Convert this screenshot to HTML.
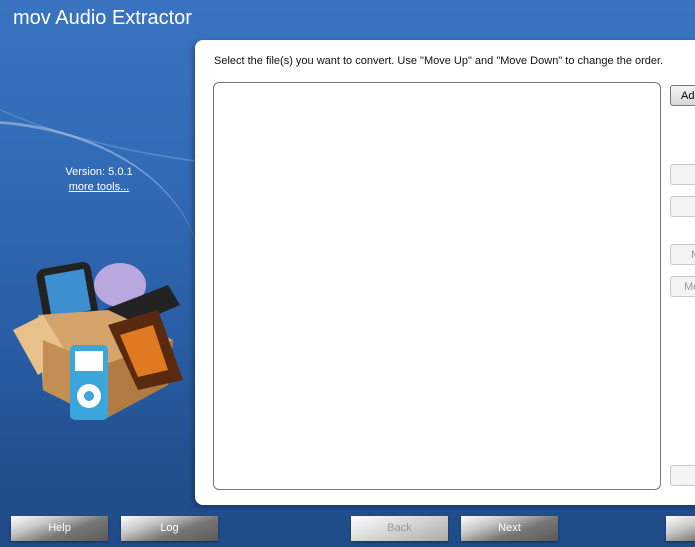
<!DOCTYPE html>
<html><head><style>
body{margin:0;width:695px;height:547px;overflow:hidden;position:relative;font-family:"Liberation Sans",sans-serif;
background:linear-gradient(180deg,#3a74c0 0%,#3069b4 35%,#2a5ea6 60%,#21508f 85%,#1f4b88 100%);}
.sw{position:absolute;left:-100px;top:-160px;width:900px;height:330px;border-radius:50%;border-bottom:2px solid rgba(255,255,255,0.18);}
.sw2{position:absolute;left:-250px;top:120px;width:450px;height:300px;border-radius:50%;border-top:3px solid rgba(255,255,255,0.35);}
.title{position:absolute;left:13px;top:7px;color:#fff;font-size:20px;}
.ver{position:absolute;left:0;width:198px;text-align:center;top:165px;color:#fff;font-size:11px;line-height:15px}
.ver u{color:#fff}
.panel{position:absolute;left:195px;top:40px;width:520px;height:465px;background:#fff;border-radius:8px;box-shadow:-2px 2px 6px rgba(0,0,0,0.3)}
.inst{position:absolute;left:214px;top:55px;font-size:11px;color:#111;white-space:nowrap}
.list{position:absolute;left:213px;top:82px;width:446px;height:406px;border:1px solid #777;border-radius:6px;background:#fff}
.sb{position:absolute;left:670px;width:40px;height:21px;border:1px solid #c8c8c8;border-radius:3px;background:#f4f4f4;font-size:11px;color:#999;line-height:21px;padding-left:8px;box-sizing:border-box}
.bb{position:absolute;top:516px;width:97px;height:25px;background:linear-gradient(160deg,#ffffff 0%,#c8c8c8 30%,#777 60%,#5a5a5a 100%);color:#fff;font-size:11px;text-align:center;line-height:25px;box-shadow:0 1px 2px rgba(0,0,0,0.4)}
</style></head><body>
<div class="sw"></div><div class="sw2"></div>
<div class="title">mov Audio Extractor</div>
<div class="ver">Version: 5.0.1<br><u>more tools...</u></div>
<svg style="position:absolute;left:8px;top:255px" width="190" height="175">
<ellipse cx="112" cy="30" rx="26" ry="22" fill="#b9a8e0"/>
<rect x="32" y="10" width="55" height="58" rx="8" fill="#222" transform="rotate(-10 60 40)"/>
<rect x="40" y="17" width="40" height="42" fill="#3d8fd0" transform="rotate(-10 60 40)"/>
<path d="M70 65 L160 30 L172 50 L90 85Z" fill="#222"/>
<path d="M30 60 L100 55 L165 85 L160 130 L95 165 L35 135Z" fill="#d4a46a"/>
<path d="M5 75 L35 60 L60 100 L30 120Z" fill="#e8c08a"/>
<path d="M35 135 L95 165 L95 110 L35 85Z" fill="#c48f55"/>
<path d="M95 110 L165 85 L160 130 L95 165Z" fill="#b07a40"/>
<path d="M100 70 L150 55 L175 125 L130 135Z" fill="#5a2a10"/>
<path d="M112 80 L145 70 L160 115 L130 122Z" fill="#e07a20"/>
<rect x="62" y="90" width="38" height="75" rx="5" fill="#3aa6dc"/>
<rect x="67" y="96" width="28" height="20" fill="#fff"/>
<circle cx="81" cy="141" r="12" fill="#fff"/><circle cx="81" cy="141" r="5" fill="#3aa6dc"/>
</svg>
<div class="panel"></div>
<div class="inst">Select the file(s) you want to convert. Use "Move Up" and "Move Down" to change the order.</div>
<div class="list"></div>
<div class="sb" style="top:85px;background:linear-gradient(#f6f6f6,#d8d8d8);border-color:#777;color:#000;padding-left:10px">Add</div>
<div class="sb" style="top:164px"></div>
<div class="sb" style="top:196px"></div>
<div class="sb" style="top:244px;padding-left:20px">M</div>
<div class="sb" style="top:276px;padding-left:13px">Mo</div>
<div class="sb" style="top:465px"></div>
<div class="bb" style="left:11px">Help</div>
<div class="bb" style="left:121px">Log</div>
<div class="bb" style="left:351px;background:linear-gradient(160deg,#fff 0%,#ddd 40%,#aaa 100%);color:#999">Back</div>
<div class="bb" style="left:461px">Next</div>
<div class="bb" style="left:666px"></div>
</body></html>
